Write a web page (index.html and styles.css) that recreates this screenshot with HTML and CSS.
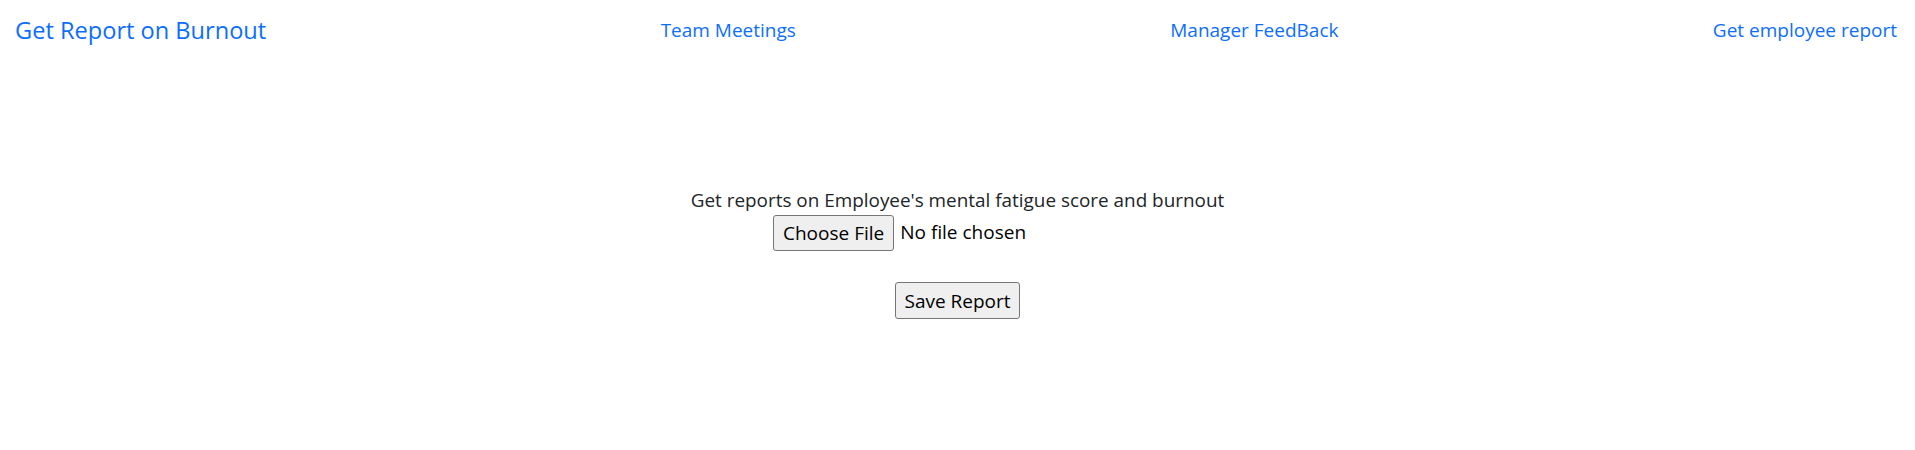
FILE: index.html
```html
<!DOCTYPE html>
<html lang="en">
<head>
<meta charset="utf-8">
<title>Get Report on Burnout</title>
<link rel="stylesheet" href="styles.css">
</head>
<body>
<nav class="navbar">
  <a class="brand" href="#">Get Report on Burnout</a>
  <a class="nav-link" href="#">Team Meetings</a>
  <a class="nav-link" href="#">Manager FeedBack</a>
  <a class="nav-link" href="#">Get employee report</a>
</nav>
<main class="content">
  <p class="lead">Get reports on Employee's mental fatigue score and burnout</p>
  <div class="file-row">
    <div class="file-input">
      <span class="file-btn">Choose File</span>
      <span class="file-status">No file chosen</span>
    </div>
  </div>
  <div class="save-row">
    <button class="save-btn" type="button">Save Report</button>
  </div>
</main>
</body>
</html>
```
FILE: styles.css
```css
html, body {
  margin: 0;
  padding: 0;
  background: #ffffff;
}
body {
  font-family: "Open Sans", "Noto Sans", sans-serif;
  font-size: 19px;
  line-height: 1.5;
  color: #212529;
}
.navbar {
  display: flex;
  align-items: center;
  justify-content: space-between;
  padding: 12px 18px 12px 15px;
}
.brand {
  font-size: 23.6px;
  line-height: 36px;
  color: #0d6efd;
  text-decoration: none;
  margin-right: 20px;
}
.nav-link {
  font-size: 19px;
  line-height: 28.5px;
  color: #0d6efd;
  text-decoration: none;
}
.content {
  padding-top: 126px;
}
.lead {
  margin: 0;
  font-size: 18.9px;
  line-height: 28.5px;
  text-align: center;
}
.file-row {
  display: flex;
  justify-content: center;
}
.file-input {
  width: 369px;
  display: flex;
  align-items: center;
  gap: 6px;
}
.file-btn, .save-btn {
  box-sizing: border-box;
  font-family: inherit;
  font-size: 19px;
  color: #000000;
  background: #efefef;
  border: 1px solid #767676;
  border-radius: 3px;
}
.file-btn {
  display: inline-block;
  height: 36px;
  line-height: 34px;
  padding: 0 9px;
}
.file-status {
  color: #000000;
}
.save-row {
  display: flex;
  justify-content: center;
  margin-top: 31px;
}
.save-btn {
  height: 37px;
  line-height: 32px;
  padding: 2px 8px 1px;
}
```
